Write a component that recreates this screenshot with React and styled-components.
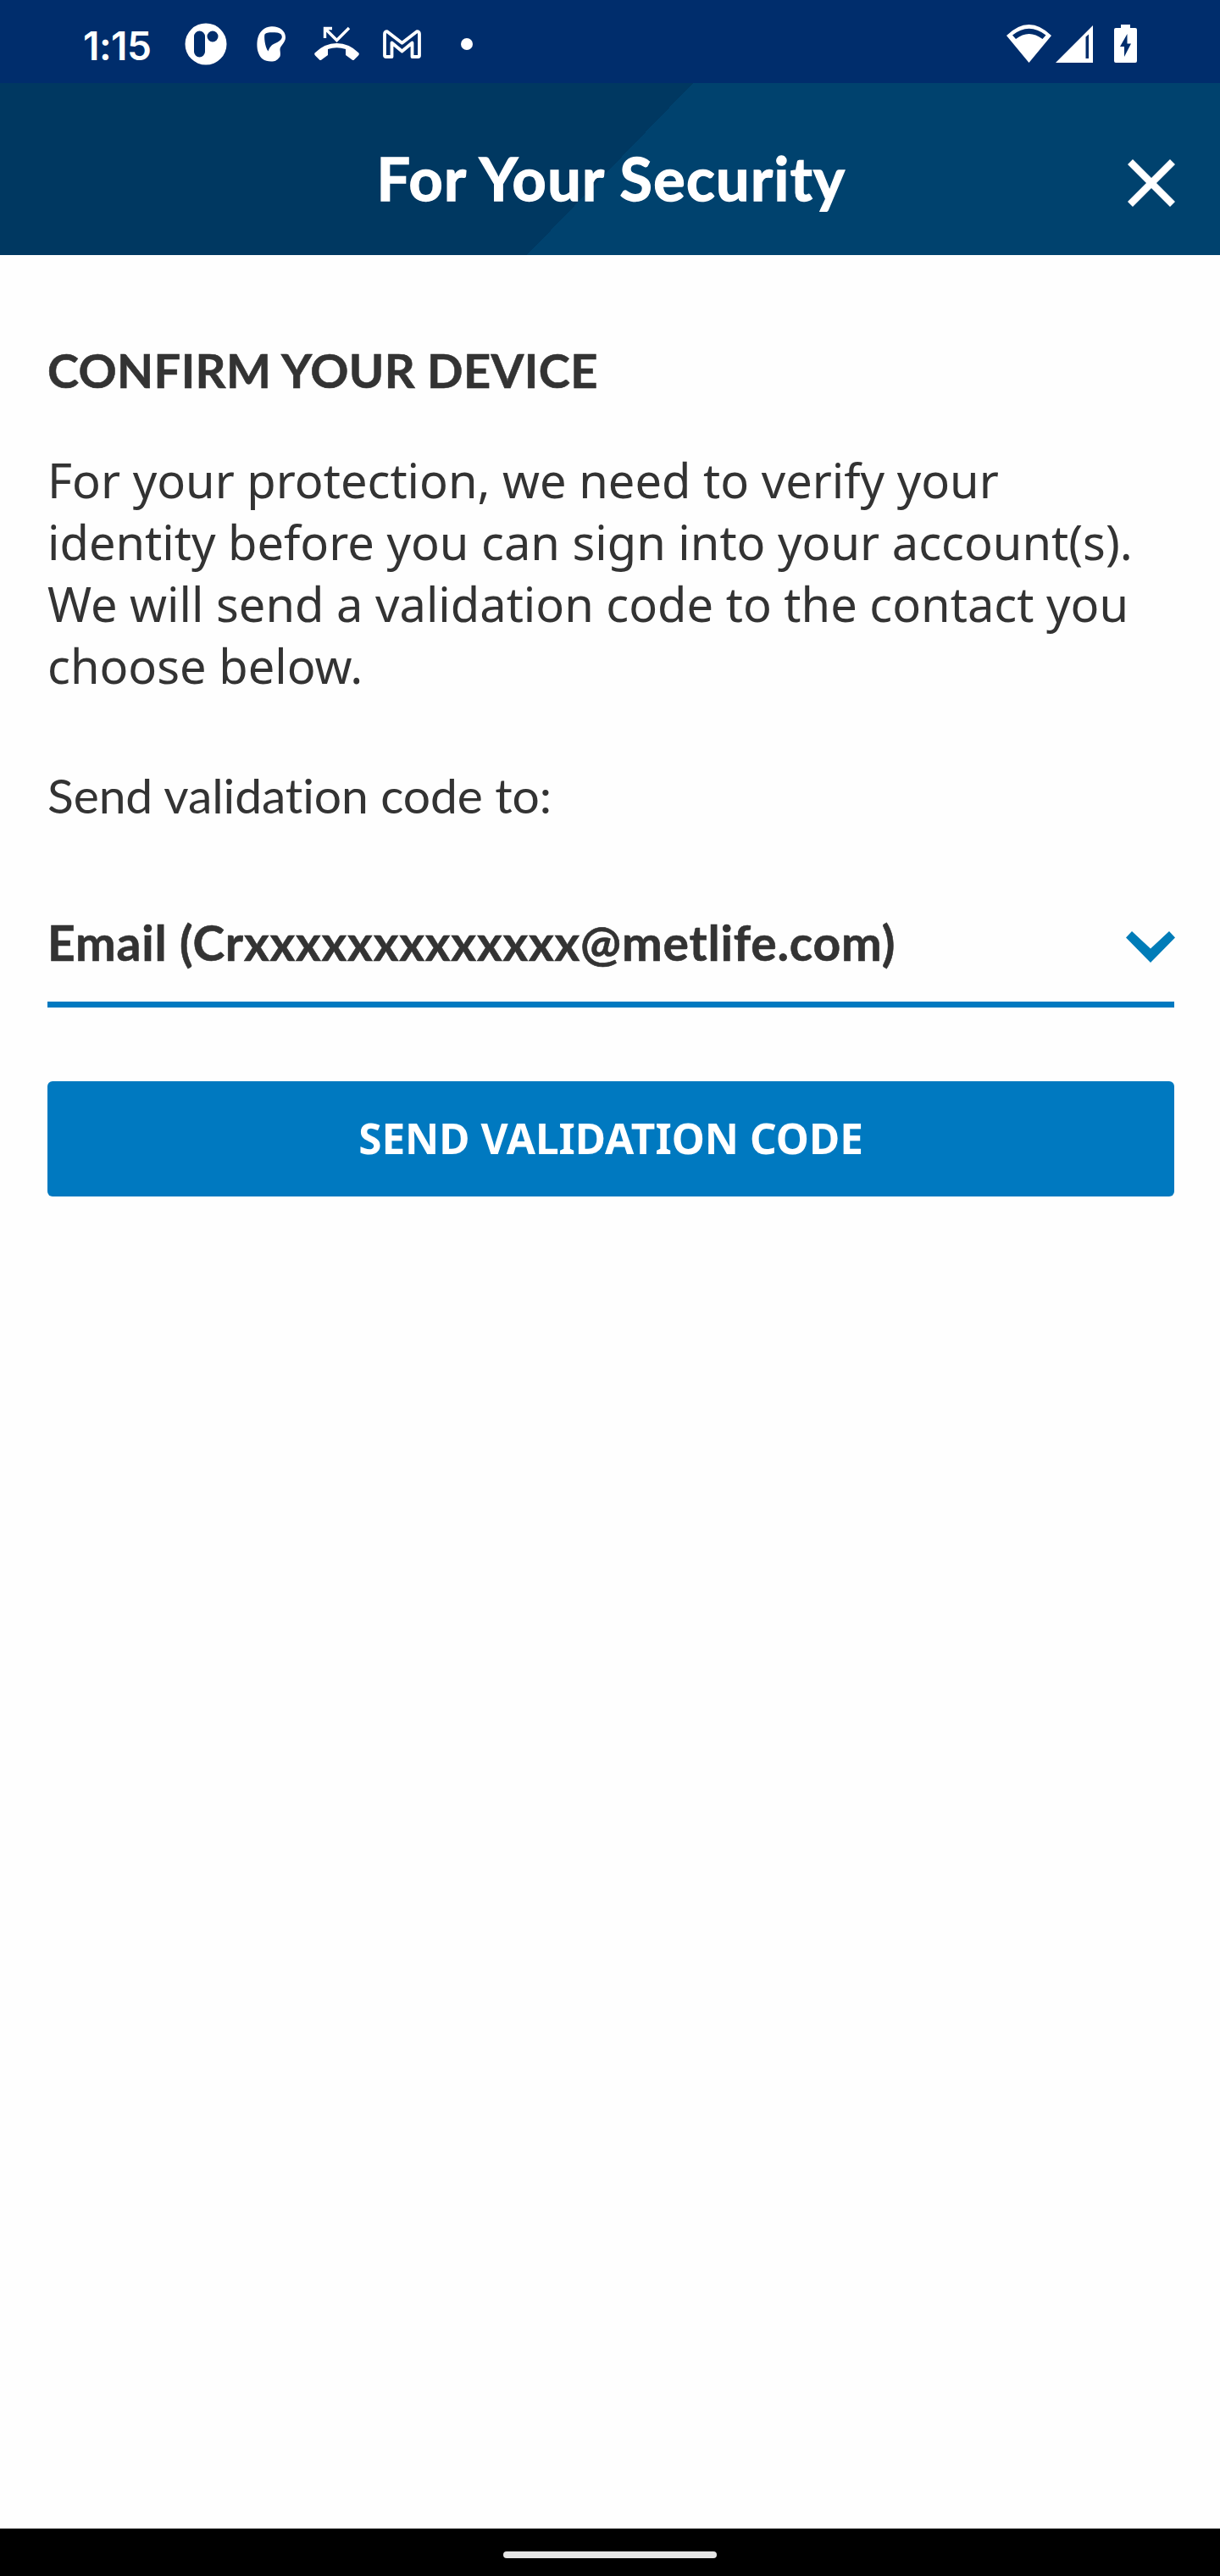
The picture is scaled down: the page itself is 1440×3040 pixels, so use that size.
import React from "react";
import styled, { createGlobalStyle } from "styled-components";

const GlobalStyle = createGlobalStyle`
  *, *::before, *::after { box-sizing: border-box; }
  body { margin: 0; background: #fefefe; }
`;

const brandFont = `Lato, "Open Sans", sans-serif`;
const bodyFont = `"Noto Sans", "Open Sans", sans-serif`;

const Screen = styled.div`
  display: flex;
  flex-direction: column;
  width: 1440px;
  height: 3040px;
  background: #fefefe;
  color: #333;
`;

const StatusBar = styled.div`
  display: flex;
  justify-content: space-between;
  height: 98px;
  padding: 0 98px;
  background: #002d6c;
`;

const StatusGroup = styled.div`
  display: flex;
  align-items: center;
  padding-top: 5px;
`;

const Clock = styled.time`
  width: 120px;
  padding-top: 5px;
  color: #fff;
  font: 600 46px/56px Inter, sans-serif;
  letter-spacing: -0.5px;
`;

const StatusIcon = styled.svg`
  display: block;
  flex: none;
  overflow: visible;
  width: ${(p) => p.$w}px;
  height: ${(p) => p.$h}px;
  margin-right: ${(p) => p.$gap || 0}px;
  fill: #fff;
`;

const Header = styled.header`
  display: grid;
  grid-template-columns: 1fr auto 1fr;
  height: 203px;
  padding: 0 53px 0 56px;
  background: linear-gradient(134deg, #003861 50%, #00426e 50%);
`;

const Title = styled.h1`
  grid-column: 2;
  margin: 70px 0 0;
  color: #fff;
  font: 700 70px/84px ${brandFont};
  font-variant-ligatures: none;
  letter-spacing: 1.4px;
  white-space: nowrap;
  -webkit-text-stroke: 1.4px currentColor;
`;

const CloseButton = styled.button`
  grid-column: 3;
  justify-self: end;
  width: 56px;
  height: 56px;
  margin-top: 90px;
  padding: 0;
  border: 0;
  background: none;
`;

const Glyph = styled.svg`
  display: block;
  flex: none;
  width: ${(p) => p.$w}px;
  height: ${(p) => p.$h}px;
`;

const Main = styled.main`
  display: flex;
  flex: 1;
  flex-direction: column;
  padding: 102px 54px 0 56px;
`;

const Heading = styled.h2`
  margin: 0;
  font: 700 56px/68px ${brandFont};
  letter-spacing: 0.35px;
  -webkit-text-stroke: 0.6px currentColor;
`;

const Paragraph = styled.p`
  margin: 59px 0 0;
  font: 400 56px/73px ${bodyFont};
`;

const Label = styled.p`
  margin: 82px 0 0;
  font: 400 57px/68px ${brandFont};
  font-variant-ligatures: none;
  letter-spacing: -0.1px;
`;

const Select = styled.div`
  display: flex;
  justify-content: space-between;
  height: 111px;
  margin-top: 106px;
  border-bottom: 7px solid #0079c0;
  font: 700 57px/68px ${brandFont};
  font-variant-ligatures: none;
  letter-spacing: 0.8px;
  -webkit-text-stroke: 0.6px currentColor;
`;

const Chevron = styled(Glyph)`
  margin: 21px -1px 0 0;
`;

const SubmitButton = styled.button`
  display: flex;
  align-items: center;
  justify-content: center;
  height: 136px;
  margin-top: 87px;
  padding: 0 0 2px;
  border: 0;
  border-radius: 6px;
  background: #0079c0;
  color: #fff;
  font: 700 49.5px/68px ${bodyFont};
`;

const NavBar = styled.div`
  display: flex;
  justify-content: center;
  height: 56px;
  padding-top: 27px;
  background: #000;
`;

const HomeHandle = styled.div`
  width: 252px;
  height: 8px;
  border-radius: 4px;
  background: #e6e6e6;
`;

export default function App() {
  return (
    <>
      <GlobalStyle />
      <Screen>
        <StatusBar>
          <StatusGroup>
            <Clock>1:15</Clock>
            <StatusIcon $w={50} $h={50} $gap={35} viewBox="0 0 50 50">
              <path
                fillRule="evenodd"
                d="M25 .5a24.5 24.5 0 1 0 0 49a24.5 24.5 0 1 0 0-49ZM17.5 9.5A6.5 6.5 0 0 1 24 16V34A6.5 6.5 0 0 1 11 34V16A6.5 6.5 0 0 1 17.5 9.5ZM33 9.5a6.5 6.5 0 1 1 0 13a6.5 6.5 0 1 1 0-13Z"
              />
            </StatusIcon>
            <StatusIcon $w={34} $h={42} $gap={34} viewBox="0 0 34 42">
              <path
                fillRule="evenodd"
                d="M17 .3C26 -.5 34 5 34 13C34 20 27 23 27.5 28C28 32 28.5 36 26 37.5C24 40 22 41.5 17 41.5C9 41.5 4 38 1.5 30C-1 20 0 2 17 .3ZM9.5 9.5C8.5 12 9.5 24 13.5 29.5C14.5 27 16 23 20 21C24 19 29 17 29.8 13C30 10 28 8 24 7.5C18 7 11 7 9.5 9.5Z"
              />
            </StatusIcon>
            <StatusIcon $w={53} $h={41} $gap={28} viewBox="0 0 53 41">
              <path d="M12.5 14V2.500H21M13 3L26.500 16.500L41 2" fill="none" stroke="#fff" strokeWidth="3.4" />
              <path d="M.5 31.500Q12 20 26.500 20Q41 20 52.500 31.500Q53.500 33 52 34.500L47 39.500Q46 40.500 44.500 39.500L37 34V27Q26.500 23.500 16 27V34L8.500 39.500Q7 40.500 6 39.500L1 34.500Q-.5 33 .5 31.500Z" />
            </StatusIcon>
            <StatusIcon $w={45} $h={34} $gap={47} viewBox="0 0 45 34">
              <path
                d="M2 5Q2 2 5 2.200L22.500 15.800L40 2.200Q43 2 43 5V30.500Q43 32 41.500 32H34.500V15.500L22.500 25.500L10.500 15.500V32H3.500Q2 32 2 30.500Z"
                fill="none"
                stroke="#fff"
                strokeWidth="3.8"
                strokeLinejoin="round"
              />
            </StatusIcon>
            <StatusIcon $w={14} $h={14} viewBox="0 0 14 14">
              <circle cx="7" cy="7" r="7" />
            </StatusIcon>
          </StatusGroup>
          <StatusGroup>
            <StatusIcon $w={53} $h={45} $gap={5} viewBox="0 0 53 45">
              <path
                fillRule="evenodd"
                d="M0 13Q26.500 -13 53 13L26.500 45ZM7 12.500L11 17Q26.500 5 42.500 17L46.500 12.500Q26.500 -3 7 12.500Z"
              />
            </StatusIcon>
            <StatusIcon $w={44} $h={44} $gap={25} viewBox="0 0 44 44">
              <path fillRule="evenodd" d="M44 0V44H0ZM35.500 13.500V39H39V10.500Z" />
            </StatusIcon>
            <StatusIcon $w={27} $h={45} viewBox="0 0 27 45">
              <path
                fillRule="evenodd"
                d="M8 0H19V4H25Q27 4 27 6V43Q27 45 25 45H2Q0 45 0 43V6Q0 4 2 4H8ZM15.500 11L7 26H12V38L20 22.500H15.500Z"
              />
            </StatusIcon>
          </StatusGroup>
        </StatusBar>
        <Header>
          <Title>For Your Security</Title>
          <CloseButton aria-label="Close">
            <Glyph $w={56} $h={56} viewBox="0 0 56 56">
              <path d="M3 3L53 53M53 3L3 53" stroke="#fff" strokeWidth="8.5" />
            </Glyph>
          </CloseButton>
        </Header>
        <Main>
          <Heading>CONFIRM YOUR DEVICE</Heading>
          <Paragraph>
            For your protection, we need to verify your identity before you can sign into your account(s). We will
            send a validation code to the contact you choose below.
          </Paragraph>
          <Label>Send validation code to:</Label>
          <Select role="combobox">
            <span>Email (Crxxxxxxxxxxxxx@metlife.com)</span>
            <Chevron $w={58} $h={37} viewBox="0 0 58 37">
              <path d="M0 7.500L7 0L29 20.500L51 0L58 7.500L29 37Z" fill="#007cb8" />
            </Chevron>
          </Select>
          <SubmitButton>SEND VALIDATION CODE</SubmitButton>
        </Main>
        <NavBar>
          <HomeHandle />
        </NavBar>
      </Screen>
    </>
  );
}
